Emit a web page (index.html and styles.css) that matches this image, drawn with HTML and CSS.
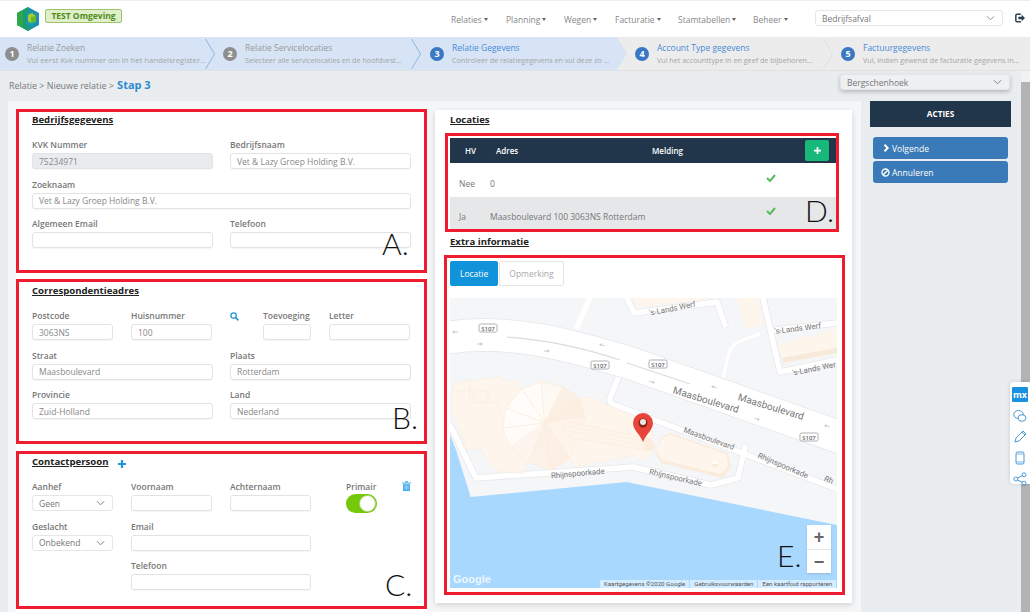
FILE: index.html
```html
<!DOCTYPE html>
<html lang="nl">
<head>
<meta charset="utf-8">
<title>Relatie - Stap 3</title>
<link rel="stylesheet" href="styles.css">
</head>
<body>
<header class="topbar">
  <div class="brand">
    <svg class="logo" viewBox="0 0 22 24"><polygon points="11,0 22,6 22,18 11,24 0,18 0,6" fill="#1e8fb0"/><polygon points="0,6 6,3 6,21 0,18" fill="#2ea84a"/><polygon points="6,3 11,0 11,5 9,6 9,18 14,21 11,24 6,21" fill="#1b9e6c"/><polygon points="11,5 19,9.500 19,16 14,19 10,17 10,7" fill="#17a2a8"/><polygon points="11,8 15,6 19,9 19,14 14,16 11,14" fill="#a5cf2a"/><polygon points="14,10 19,9 19,14 14,16" fill="#6fb52b"/></svg>
    <span class="env-badge">TEST Omgeving</span>
  </div>
  <nav class="nav">
    <a class="nav-item nav-relaties">Relaties<i class="caret"></i></a>
    <a class="nav-item nav-planning">Planning<i class="caret"></i></a>
    <a class="nav-item nav-wegen">Wegen<i class="caret"></i></a>
    <a class="nav-item nav-facturatie">Facturatie<i class="caret"></i></a>
    <a class="nav-item nav-stam">Stamtabellen<i class="caret"></i></a>
    <a class="nav-item nav-beheer">Beheer<i class="caret"></i></a>
  </nav>
  <div class="select select-top">Bedrijfsafval<svg class="chev" viewBox="0 0 10 6"><path d="M1 1l4 4 4-4" fill="none" stroke="#888" stroke-width="1"/></svg></div>
  <svg class="logout" viewBox="0 0 12 11"><path d="M7 1H2.500A1.500 1.500 0 0 0 1 2.500v6A1.500 1.500 0 0 0 2.500 10H7" fill="none" stroke="#2c3e50" stroke-width="1.800"/><path d="M4 4h4V1.500l4 4-4 4V7H4z" fill="#2c3e50"/></svg>
</header>

<ol class="stepper">
  <li class="step step-done step-one">
    <span class="num">1</span>
    <div class="step-text"><div class="step-title">Relatie Zoeken</div><div class="step-sub">Vul eerst Kvk nummer om in het handelsregister...</div></div>
    <svg class="step-chev" viewBox="0 0 10 30"><path d="M0.500 0L9.500 15 0.500 30" fill="none" stroke="#8fb4e3" stroke-width="1"/></svg>
  </li>
  <li class="step step-done">
    <span class="num">2</span>
    <div class="step-text"><div class="step-title">Relatie Servicelocaties</div><div class="step-sub">Selecteer alle servicelocaties en de hoofdvest...</div></div>
    <svg class="step-chev" viewBox="0 0 10 30"><path d="M0.500 0L9.500 15 0.500 30" fill="none" stroke="#8fb4e3" stroke-width="1"/></svg>
  </li>
  <li class="step step-current">
    <span class="num num-blue">3</span>
    <div class="step-text"><div class="step-title">Relatie Gegevens</div><div class="step-sub">Controleer de relatiegegevens en vul deze zo ...</div></div>
    <svg class="step-point" viewBox="0 0 10 33"><polygon points="0,0 10,16.500 0,33" fill="#d6e4f5"/></svg>
  </li>
  <li class="step step-todo step-four">
    <span class="num num-blue">4</span>
    <div class="step-text"><div class="step-title">Account Type gegevens</div><div class="step-sub">Vul het accounttype in en geef de bijbehoren...</div></div>
    <svg class="step-chev step-chev-grey" viewBox="0 0 10 30"><path d="M0.500 0L9.500 15 0.500 30" fill="none" stroke="#e0e0e0" stroke-width="1"/></svg>
  </li>
  <li class="step step-todo">
    <span class="num num-blue">5</span>
    <div class="step-text"><div class="step-title">Factuurgegevens</div><div class="step-sub">Vul, indien gewenst de facturatie gegevens in...</div></div>
  </li>
</ol>

<div class="workspace">
  <div class="page">
    <div class="subbar">
      <div class="crumb">Relatie &gt; Nieuwe relatie &gt; <strong>Stap 3</strong></div>
      <div class="select select-loc">Bergschenhoek<svg class="chev" viewBox="0 0 10 6"><path d="M1 1l4 4 4-4" fill="none" stroke="#777" stroke-width="1"/></svg></div>
    </div>
    <div class="columns">
      <main class="panel">
        <div class="col-left">
          <section class="mark form-a">
            <h2 class="heading">Bedrijfsgegevens</h2>
            <div class="grid grid-2">
              <label class="field"><span>KVK Nummer</span><input class="input input-off" value="75234971" readonly></label>
              <label class="field"><span>Bedrijfsnaam</span><input class="input" value="Vet &amp; Lazy Groep Holding B.V."></label>
              <label class="field span-2"><span>Zoeknaam</span><input class="input" value="Vet &amp; Lazy Groep Holding B.V."></label>
              <label class="field"><span>Algemeen Email</span><input class="input"></label>
              <label class="field"><span>Telefoon</span><input class="input"></label>
            </div>
            <b class="tag tag-a">A.</b>
          </section>
          <section class="mark form-b">
            <h2 class="heading">Correspondentieadres</h2>
            <div class="grid grid-addr">
              <label class="field"><span>Postcode</span><input class="input" value="3063NS"></label>
              <label class="field"><span>Huisnummer</span><input class="input" value="100"></label>
              <svg class="icon-search" viewBox="0 0 10 10"><circle cx="4" cy="4" r="3" fill="none" stroke="#1f94dc" stroke-width="1.400"/><path d="M6.300 6.300L9.300 9.300" stroke="#1f94dc" stroke-width="1.800"/></svg>
              <label class="field"><span>Toevoeging</span><input class="input"></label>
              <label class="field"><span>Letter</span><input class="input"></label>
            </div>
            <div class="grid grid-2 after-row">
              <label class="field"><span>Straat</span><input class="input" value="Maasboulevard"></label>
              <label class="field"><span>Plaats</span><input class="input" value="Rotterdam"></label>
              <label class="field"><span>Provincie</span><input class="input" value="Zuid-Holland"></label>
              <label class="field"><span>Land</span><input class="input" value="Nederland"></label>
            </div>
            <b class="tag tag-b">B.</b>
          </section>
          <section class="mark form-c">
            <h2 class="heading heading-plus">Contactpersoon<svg class="icon-plus" viewBox="0 0 8 8"><path d="M4 0v8M0 4h8" stroke="#1f94dc" stroke-width="2.200"/></svg></h2>
            <div class="grid grid-contact">
              <div class="field"><span>Aanhef</span><div class="select select-field">Geen<svg class="chev" viewBox="0 0 10 6"><path d="M1 1l4 4 4-4" fill="none" stroke="#777" stroke-width="1"/></svg></div></div>
              <label class="field"><span>Voornaam</span><input class="input"></label>
              <label class="field"><span>Achternaam</span><input class="input"></label>
              <div class="field field-primary"><span>Primair</span><div class="toggle"><i></i></div></div>
              <svg class="icon-trash" viewBox="0 0 9 10"><path d="M0 1.500h9v1H0zM3 .3h3v1H3z" fill="#45ade8"/><path d="M1 3.200h7V10H1z" fill="#45ade8"/><path d="M3 4.500v4M4.500 4.500v4M6 4.500v4" stroke="#fff" stroke-width=".5"/></svg>
              <div class="field"><span>Geslacht</span><div class="select select-field">Onbekend<svg class="chev" viewBox="0 0 10 6"><path d="M1 1l4 4 4-4" fill="none" stroke="#777" stroke-width="1"/></svg></div></div>
              <label class="field span-2"><span>Email</span><input class="input"></label>
              <label class="field span-2 col-2"><span>Telefoon</span><input class="input"></label>
            </div>
            <b class="tag tag-c">C.</b>
          </section>
        </div>

        <div class="col-right">
          <h2 class="heading heading-loc">Locaties</h2>
          <section class="mark box-d">
            <div class="t-head">
              <span class="c-hv">HV</span><span class="c-adres">Adres</span><span>Melding</span>
              <button class="btn-add" type="button"><svg viewBox="0 0 8 8"><path d="M4 0v8M0 4h8" stroke="#fff" stroke-width="2"/></svg></button>
            </div>
            <div class="t-row">
              <span class="c-val">Nee</span><span class="c-addr">0</span>
              <svg class="check" viewBox="0 0 10 8"><path d="M1 4l3 3 5-6" fill="none" stroke="#5cb85c" stroke-width="2"/></svg>
            </div>
            <div class="t-row t-row-alt">
              <span class="c-val">Ja</span><span class="c-addr">Maasboulevard 100 3063NS Rotterdam</span>
              <svg class="check" viewBox="0 0 10 8"><path d="M1 4l3 3 5-6" fill="none" stroke="#5cb85c" stroke-width="2"/></svg>
            </div>
            <b class="tag tag-d">D.</b>
          </section>
          <h2 class="heading heading-extra">Extra informatie</h2>
          <section class="mark box-e">
            <div class="tabs"><span class="tab tab-on">Locatie</span><span class="tab">Opmerking</span></div>
            <div class="map">
              <svg class="map-art" viewBox="450 298 387 290" width="387" height="290">
                <defs>
                  <path id="arrow-r" d="M-3 -.4h3.500v-1.300L3 0 .5 1.700V.4H-3z" fill="#c3c8dc"/>
                </defs>
                <rect x="450" y="298" width="387" height="290" fill="#f5f6f8"/>
                <polygon points="450,435 456,450 470.700,497 626.700,482 837,525 837,588 450,588" fill="#a9d8ff"/>
                <!-- upper buildings -->
                <g fill="#fef5ec">
                  <polygon points="633,298 637,308 717,298"/>
                  <polygon points="737,298 745,328 763,326 758,298"/>
                  <polygon points="778,345 783,363 837,353 837,328"/>
                </g>
                <polygon points="782,358 837,348 837,353 783,363" fill="#f8eadb"/>
                <!-- minor roads -->
                <g fill="none" stroke="#e6e8ec" stroke-width="7" stroke-linecap="round" stroke-linejoin="round">
                  <path d="M627 298L634 313 717 302 725 325"/>
                  <path d="M763 298L780 372 837 360"/>
                  <path d="M775 330L837 323"/>
                  <path d="M618 378L610 398Q609 403 615 405L837 489"/>
                  <path d="M745 447L738 478 711 485 633 467 476 478 450 425"/>
                </g>
                <g fill="none" stroke="#fff" stroke-width="5.500" stroke-linecap="round" stroke-linejoin="round">
                  <path d="M627 298L634 313 717 302 725 325"/>
                  <path d="M763 298L780 372 837 360"/>
                  <path d="M775 330L837 323"/>
                  <path d="M577 327L590 298"/>
                  <path d="M618 378L610 398Q609 403 615 405L837 489"/>
                  <path d="M745 447L738 478 711 485 633 467 476 478 450 425"/>
                </g>
                <path d="M723 378L730 350Q733 342 760 334" fill="none" stroke="#fff" stroke-width="3"/>
                <!-- main building -->
                <polygon points="451.300,396.700 454.700,383.300 499.700,376.700 503,381.700 514.700,380 522,389.300 541.300,381.700 563,386.700 579.700,398.300 591.300,397.300 603,403.300 634.700,416.700 653,433.300 654.700,448.300 648,458.300 633,455 574.700,466.700 569.700,460 551.300,470 528,461.700 523,473.300 498,471.700 484.700,456.700 481.300,448.300 468,450 451.300,410" fill="#fef5ec" stroke="#fbeee0" stroke-width=".7"/>
                <path d="M455 392L470 390 481 402 497 403 503 420 510 448M470 378V402M474 392h14v11h-14z" fill="none" stroke="#fbecdc" stroke-width=".7"/>
                <!-- fan roof -->
                <g stroke="#fbebdb" stroke-width=".6">
                  <polygon points="544.700,422.700 522,389 541,382" fill="#fffcf8"/>
                  <polygon points="544.700,422.700 541,382 563,387" fill="#fff9f3"/>
                  <polygon points="544.700,422.700 563,387 580,398" fill="#fcf0e4"/>
                  <polygon points="544.700,422.700 580,398 585,417" fill="#fcefe2"/>
                  <polygon points="544.700,422.700 585,417 570,458" fill="#fef4ea"/>
                  <polygon points="544.700,422.700 570,458 550,470" fill="#fcf0e4"/>
                  <polygon points="544.700,422.700 550,470 528,462" fill="#fcf1e6"/>
                  <polygon points="544.700,422.700 528,462 510,448" fill="#fef6ee"/>
                  <polygon points="544.700,422.700 510,448 503,428" fill="#fffcf8"/>
                  <polygon points="544.700,422.700 503,428 506,408" fill="#fffcf9"/>
                  <polygon points="544.700,422.700 506,408 522,389" fill="#fffcf9"/>
                </g>
                <!-- long wing -->
                <polygon points="563,427 570,422 641,437 645,450 571,438" fill="#fef4e9" stroke="#fbebdb" stroke-width=".7"/>
                <path d="M568 426L642 441M568 431L643 445" stroke="#fbeee0" stroke-width=".6"/>
                <path d="M643 436Q656 440 655 449Q653 457 645 450Z" fill="#fbecdb"/>
                <path d="M633 455Q640 461 648 458L654 449 645 452Z" fill="#fef5ec"/>
                <!-- east wing -->
                <polygon points="655,453 661,437 670,433 728,453 731,467 723,478 661,463" fill="#faecdc"/>
                <polygon points="656,451 662,438 670,435 726,454 728,466 721,474 662,460" fill="#fef6ed"/>
                <polygon points="715,460 719,464 715,468 711,464" fill="#f9ead9"/>
                <polygon points="715,460 719,464 711,464" fill="#fff"/>
                <!-- main road -->
                <path d="M445 338C510 328 570 345 630 363L842 438" fill="none" stroke="#e4e6ea" stroke-width="33.500"/>
                <path d="M445 338C510 328 570 345 630 363L842 438" fill="none" stroke="#fff" stroke-width="32"/>
                <path d="M507 337C550 340 590 350 620 360M627 363L690 384" fill="none" stroke="#d8dbe0" stroke-width="1.200"/>
                <!-- arrows -->
                <use href="#arrow-r" transform="translate(455 332) rotate(180)"/>
                <use href="#arrow-r" transform="translate(480 344)"/>
                <use href="#arrow-r" transform="translate(547 351)"/>
                <use href="#arrow-r" transform="translate(602 345) rotate(190)"/>
                <use href="#arrow-r" transform="translate(652 382) rotate(15)"/>
                <use href="#arrow-r" transform="translate(714 387) rotate(195)"/>
                <use href="#arrow-r" transform="translate(757 419) rotate(15)"/>
                <use href="#arrow-r" transform="translate(827 426) rotate(195)"/>
                <!-- labels -->
                <g class="shields">
                  <g><rect x="479" y="324" width="18" height="8" rx="1.500"/><text x="488" y="330.500">S107</text></g>
                  <g><rect x="591" y="361" width="18" height="8" rx="1.500"/><text x="600" y="367.500">S107</text></g>
                  <g><rect x="649" y="360" width="18" height="8" rx="1.500"/><text x="658" y="366.500">S107</text></g>
                  <g><rect x="800" y="433" width="18" height="8" rx="1.500"/><text x="809" y="439.500">S107</text></g>
                </g>
                <g class="road-labels">
                  <text class="l-big" transform="translate(705 403) rotate(17)">Maasboulevard</text>
                  <text class="l-big" transform="translate(770 410) rotate(17)">Maasboulevard</text>
                  <text transform="translate(708 441) rotate(20)">Maasboulevard</text>
                  <text transform="translate(578 476) rotate(-5)">Rhijnspoorkade</text>
                  <text transform="translate(675 480) rotate(13)">Rhijnspoorkade</text>
                  <text transform="translate(782 468) rotate(23)">Rhijnspoorkade</text>
                  <text class="l-end" transform="translate(832 484) rotate(23)">Rh</text>
                  <text transform="translate(673 311) rotate(-11)">'s-Lands Werf</text>
                  <text transform="translate(798 331) rotate(-7)">'s-Lands Werf</text>
                  <text class="l-end" transform="translate(836 367) rotate(-11)">'s-Lands Wer</text>
                </g>
                <!-- pin -->
                <path d="M643 442C640 434 633 430 633 423a10 10 0 0 1 20 0C653 430 646 434 643 442z" fill="#e8443a"/>
                <circle cx="643" cy="423" r="4.500" fill="#8a241b"/>
                <circle cx="643" cy="422" r="3" fill="#efe7e5"/>
              </svg>
              <div class="zoomctl"><span>+</span><span class="zoom-minus">−</span></div>
              <span class="google">Google</span>
              <div class="attrib"><span>Kaartgegevens ©2020 Google</span><span>Gebruiksvoorwaarden</span><span>Een kaartfout rapporteren</span></div>
            </div>
            <b class="tag tag-e">E.</b>
          </section>
        </div>
      </main>
      <aside class="actions">
        <div class="actions-head">ACTIES</div>
        <button class="btn" type="button"><svg viewBox="0 0 8 10"><path d="M1.500 1l4 4-4 4" fill="none" stroke="#fff" stroke-width="2.400"/></svg>Volgende</button>
        <button class="btn" type="button"><svg viewBox="0 0 10 10"><circle cx="5" cy="5" r="3.900" fill="none" stroke="#fff" stroke-width="1.500"/><path d="M2.500 7.500l5-5" stroke="#fff" stroke-width="1.500"/></svg>Annuleren</button>
      </aside>
    </div>
  </div>
  <div class="scrollbar"><i></i></div>
</div>

<div class="dock">
  <span class="mx">mx</span>
  <svg viewBox="0 0 14 14"><ellipse cx="5.500" cy="5.500" rx="4.800" ry="4" fill="none" stroke="#4a9ad4"/><ellipse cx="9" cy="9" rx="4" ry="3.300" fill="#fff" stroke="#4a9ad4"/></svg>
  <svg viewBox="0 0 14 14"><path d="M2 12l1-4 7-7 3 3-7 7z" fill="none" stroke="#4a9ad4"/><path d="M9 2l3 3" stroke="#4a9ad4"/></svg>
  <svg viewBox="0 0 14 14"><rect x="3" y="1" width="8" height="12" rx="1.500" fill="none" stroke="#4a9ad4"/><path d="M3 3h8M3 11h8" stroke="#4a9ad4" stroke-width=".7"/></svg>
  <svg viewBox="0 0 14 14"><circle cx="2.800" cy="7" r="2" fill="none" stroke="#4a9ad4"/><circle cx="11" cy="2.800" r="2" fill="none" stroke="#4a9ad4"/><circle cx="11" cy="11.200" r="2" fill="none" stroke="#4a9ad4"/><path d="M4.600 6l4.600-2.300M4.600 8l4.600 2.300" stroke="#4a9ad4"/></svg>
</div>
</body>
</html>
```
FILE: styles.css
```css
* { box-sizing: border-box; }
html, body { margin: 0; height: 612px; overflow: hidden; }
body {
  position: relative;
  display: flex;
  flex-direction: column;
  background: #e9edf0;
  font-family: "Open Sans", "Liberation Sans", sans-serif;
  font-size: 8.500px;
  color: #777;
}

/* top bar */
.topbar {
  height: 37px;
  flex: none;
  background: #fff;
  border-top: 1px solid #eceef2;
  display: flex;
  align-items: center;
}
.brand { display: flex; align-items: flex-start; width: 443px; padding-left: 17px; height: 100%; padding-top: 6px; }
.logo { width: 22px; height: 24px; flex: none; }
.env-badge {
  margin: 2px 0 0 6px;
  width: 77px; height: 14px;
  background: #dff0c8;
  border: 1px solid #9cc46c;
  border-radius: 2px;
  color: #4f8a1e;
  font-weight: 700;
  font-size: 8.500px;
  line-height: 12px;
  text-align: center;
}
.nav { display: flex; width: 372px; padding-left: 8px; font-size: 8.500px; color: #888; }
.nav-item { white-space: nowrap; display: block; }
.nav-relaties { width: 55px; }
.nav-planning { width: 58px; }
.nav-wegen { width: 51px; }
.nav-facturatie { width: 63px; }
.nav-stam { width: 75px; }
.caret {
  display: inline-block;
  margin-left: 2px;
  vertical-align: 2px;
  border-top: 3px solid #666;
  border-left: 2.500px solid transparent;
  border-right: 2.500px solid transparent;
}
.select {
  display: flex;
  align-items: center;
  justify-content: space-between;
  color: #777;
  font-size: 8.500px;
  background: #fff;
  border: 1px solid #e6e6e6;
  border-radius: 3px;
  padding: 0 7px 0 6px;
}
.chev { width: 9px; height: 6px; flex: none; }
.select-top { width: 188px; height: 16px; margin-top: -2px; }
.logout { width: 10px; height: 10px; margin: -2px 0 0 12px; }

/* stepper */
.stepper {
  list-style: none;
  margin: 0; padding: 0;
  height: 34px;
  flex: none;
  display: grid;
  grid-template-columns: 216px 206px 195px 216px 197px;
  background: #ececec;
  border-bottom: 1px solid #dfe2e5;
}
.step {
  position: relative;
  display: flex;
  align-items: center;
  gap: 8px;
  padding-left: 8px;
  white-space: nowrap;
}
.step-one { padding-left: 5px; }
.step-done { padding-left: 7px; }
.step-done.step-one { padding-left: 5px; }
.step-four { padding-left: 18px; }
.step-done, .step-current { background: #d6e4f5; }
.num {
  width: 14px; height: 14px;
  flex: none;
  border-radius: 50%;
  background: #8e8e8e;
  color: #fff;
  font-size: 9px;
  font-weight: 700;
  line-height: 14px;
  text-align: center;
}
.num-blue { background: #3a78c4; }
.step-title { font-size: 8.500px; line-height: 13px; color: #9a9a9a; }
.step-sub { font-size: 7.200px; line-height: 12px; color: #a5a5a5; }
.step-one .step-sub { font-size: 7.700px; }
.step-current .step-title, .step-todo .step-title { color: #4a8bd6; }
.step-chev { position: absolute; right: 1px; top: 2px; width: 10px; height: 30px; z-index: 1; }
.step-chev-grey { right: 0; }
.step-point { position: absolute; right: -10px; top: 0; width: 10px; height: 33px; z-index: 1; }

/* workspace */
.workspace { flex: 1; display: flex; min-height: 0; }
.page { flex: 1; min-width: 0; }
.scrollbar { width: 9px; background: #f1f1f1; padding-top: 11px; }
.scrollbar i { display: block; height: 100%; background: #b3b3b3; }
.subbar {
  height: 30px;
  display: flex;
  justify-content: space-between;
  padding: 4px 11px 0 9px;
}
.crumb { font-size: 8.900px; color: #777; padding-top: 3px; line-height: 14px; }
.crumb strong { font-size: 11px; color: #2a8bd0; margin-left: 1px; }
.select-loc {
  width: 170px; height: 16px;
  margin-top: -1px;
  background: #eef0f2;
  border-color: #e2e4e6;
  box-shadow: 0 2px 4px rgba(0, 0, 0, .22);
  padding-left: 6px;
}
.columns { display: flex; align-items: flex-start; }
.panel {
  margin-left: 8px;
  width: 853px;
  height: 511px;
  background: #f4f6f8;
  padding: 8px 9px 0 8px;
  display: flex;
  gap: 8px;
}
.col-left { width: 411px; background: #fff; display: flex; flex-direction: column; height: 503px; }
.col-right {
  width: 417px;
  height: 493px;
  margin-top: 1px;
  background: #fff;
  box-shadow: 0 2px 6px rgba(0, 0, 0, .15);
  padding: 0 0 0 9px;
}

/* annotation boxes */
.mark { position: relative; border: 3px solid #ee1c2e; }
.form-a { height: 164px; padding: 0 13px; }
.form-b { height: 165px; padding: 0 13px; margin-top: 6px; }
.form-c { height: 158px; padding: 0 13px; margin-top: 7px; }
.tag {
  position: absolute;
  font-family: Lato, "Open Sans", sans-serif;
  font-weight: 300;
  font-size: 30px;
  line-height: 30px;
  color: #111;
}
.tag-a { left: 363px; top: 116px; }
.tag-b { left: 373px; top: 120px; }
.tag-c { left: 366px; top: 115px; }
.tag-d { left: 357px; top: 59px; }
.tag-e { left: 330px; top: 282px; }

.heading {
  margin: 0;
  font-size: 9.600px;
  line-height: 14px;
  font-weight: 700;
  color: #222;
  text-decoration: underline;
}
.form-a .heading, .form-b .heading, .form-c .heading { padding-top: 1px; height: 22px; margin-top: 0; }
.form-b .heading { padding-top: 2px; }
.heading-plus { display: flex; align-items: flex-start; }
.icon-plus { width: 8px; height: 8px; margin: 5px 0 0 10px; }
.heading-loc { margin-left: 6px; height: 23px; padding-top: 3px; }
.heading-extra { margin-left: 6px; height: 23px; padding-top: 3px; }

.grid { display: grid; column-gap: 17px; row-gap: 7.500px; }
.grid-2 { grid-template-columns: 181px 181px; }
.grid-addr { grid-template-columns: 81px 81px 15px 48px 81px; column-gap: 18px; }
.grid-contact { grid-template-columns: 81px 81px 81px 55px 9px; column-gap: 18px; }
.after-row { margin-top: 7.500px; }
.span-2 { grid-column: span 2; }
.col-2 { grid-column: 2 / span 2; }
.field { display: block; min-width: 0; }
.field > span { display: block; font-size: 8.500px; font-weight: 600; line-height: 16px; color: #777; white-space: nowrap; }
.input {
  display: block;
  width: 100%;
  height: 16px;
  border: 1px solid #e3e3e3;
  border-radius: 3px;
  background: #fff;
  padding: 0 6px;
  font: 8.500px "Open Sans", "Liberation Sans", sans-serif;
  color: #888;
  box-shadow: 0 1px 1px rgba(0, 0, 0, .04);
}
.input-off { background: #e9ecef; color: #888; }
.select-field { height: 16px; }
.icon-search { width: 9px; height: 9px; margin-top: 4px; }
.icon-trash { width: 9px; height: 10px; margin-top: 2px; }
.form-a .grid { padding-top: 3px; }
.form-b .grid-addr { padding-top: 4px; }
.form-c .grid { padding-top: 3px; }
.field-primary { margin-left: 17px; width: 50px; }
.toggle {
  width: 31px; height: 19px;
  margin: -1px 0 -3px;
  border-radius: 10px;
  background: #76c80a;
  padding: 1px;
  display: flex;
  justify-content: flex-end;
}
.toggle i { width: 17px; height: 17px; border-radius: 50%; background: #fff; border: 1px solid #a6d66c; }
.grid-contact .select-field, .grid-contact .input { width: 81px; }
.grid-contact .span-2 .input { width: 180px; }

/* location table */
.box-d { width: 394px; margin-left: 1px; height: 99px; padding: 2px 0 0 2px; }
.t-head {
  height: 25px;
  background: #21364a;
  color: #fff;
  display: flex;
  align-items: center;
  font-size: 8px;
  font-weight: 600;
  padding-left: 15px;
}
.c-hv { width: 31px; }
.c-adres { width: 156px; }
.btn-add {
  margin: 0 7px 0 auto;
  width: 24px; height: 21px;
  background: #18b87a;
  border: 0;
  border-radius: 2px;
  padding: 0;
  display: flex;
  align-items: center;
  justify-content: center;
}
.btn-add svg { width: 7px; height: 7px; }
.t-row { display: flex; align-items: center; height: 34px; padding: 6px 0 0 9px; font-size: 8.500px; }
.t-row-alt { background: #e6e7e9; height: 32px; }
.c-val { width: 31px; }
.c-addr { width: 276px; }
.check { width: 10px; height: 8px; margin-top: -10px; }

.box-e { width: 401px; height: 340px; padding: 3px 5px 0 3px; }
.tabs { display: flex; gap: 1px; height: 37px; }
.tab {
  height: 25px;
  padding: 0 9px;
  line-height: 24px;
  font-size: 8.500px;
  color: #aaa;
  background: #fff;
  border: 1px solid #e4e4e4;
  border-radius: 2px;
}
.tab-on { background: #1193dc; border-color: #1193dc; color: #fff; }
.map { position: relative; width: 387px; height: 290px; overflow: hidden; }
.map-art { display: block; }
.shields rect { fill: #fff; stroke: #8a8f96; stroke-width: .7; }
.shields text { font: 600 6px "Open Sans", sans-serif; fill: #666; text-anchor: middle; }
.road-labels text { font: 7.800px "Roboto", "Open Sans", sans-serif; fill: #777; text-anchor: middle; }
.road-labels .l-big { font-size: 10px; }
.road-labels .l-end { text-anchor: end; }
.zoomctl {
  position: absolute;
  left: 357px; top: 227px;
  width: 24px; height: 48px;
  background: #fff;
  display: flex;
  flex-direction: column;
  color: #666;
  font: 700 18px/24px "Liberation Sans", sans-serif;
  text-align: center;
  box-shadow: 0 1px 2px rgba(0, 0, 0, .15);
}
.zoomctl span { height: 24px; display: block; }
.zoom-minus { border-top: 1px solid #e6e6e6; }
.google {
  position: absolute;
  left: 3px; top: 274px;
  color: #fff;
  font: 700 11px/14px "Liberation Sans", sans-serif;
  opacity: .8;
}
.attrib {
  position: absolute;
  right: 1px; bottom: 0;
  display: flex;
  gap: 1px;
  font: 6.100px/8px Roboto, sans-serif;
  color: #555;
  white-space: nowrap;
}
.attrib span { background: rgba(255, 255, 255, .5); padding: 0 4px; }

/* actions */
.actions { margin-left: 9px; width: 141px; }
.actions-head {
  height: 26px;
  background: #21364a;
  color: #fff;
  font-size: 8.200px;
  font-weight: 700;
  line-height: 26px;
  text-align: center;
}
.btn {
  display: flex;
  align-items: center;
  gap: 2px;
  width: 135px; height: 22px;
  margin: 2px 0 0 3px;
  padding: 0 0 0 8px;
  background: #3a7ab8;
  border: 0;
  border-radius: 3px;
  color: #fff;
  font: 8.500px "Open Sans", "Liberation Sans", sans-serif;
}
.btn:first-of-type { margin-top: 10px; }
.btn svg { width: 7px; height: 8px; margin-left: 2px; }
.btn + .btn svg { width: 9px; height: 9px; margin-left: 0; }

/* floating dock */
.dock {
  position: absolute;
  left: 1010px; top: 382px;
  width: 20px; height: 102px;
  background: #fff;
  border-radius: 4px 0 0 4px;
  box-shadow: 0 0 4px rgba(0, 0, 0, .15);
  display: flex;
  flex-direction: column;
  align-items: center;
  padding-top: 5px;
  gap: 7px;
}
.mx {
  width: 16px; height: 15px;
  background: #1a90e0;
  border-radius: 1px;
  color: #fff;
  font: 700 9px/15px "Open Sans", sans-serif;
  text-align: center;
}
.dock svg { width: 14px; height: 14px; flex: none; }
```
